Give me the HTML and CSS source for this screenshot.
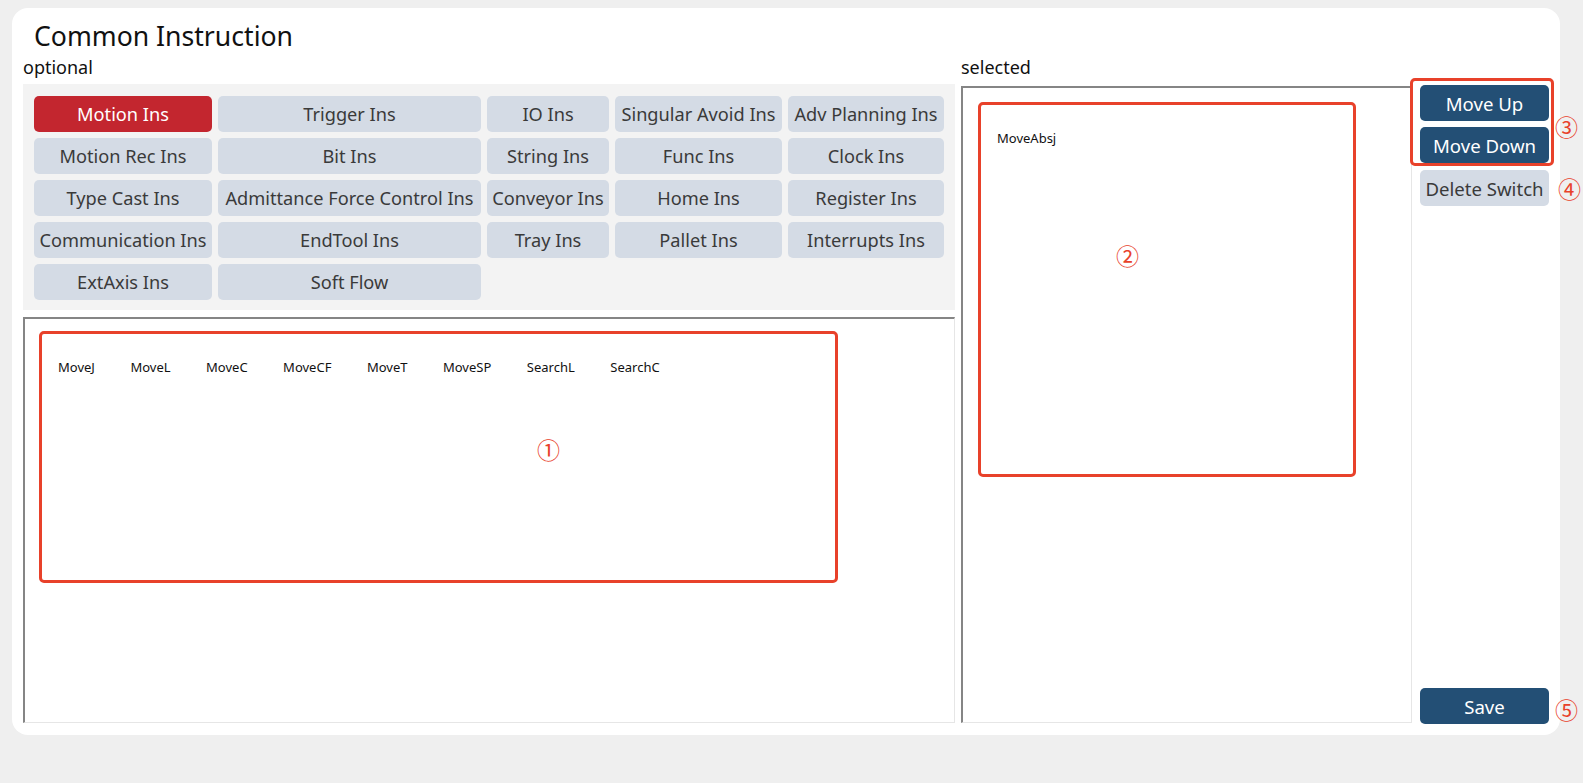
FILE: index.html
```html
<!DOCTYPE html>
<html lang="en">
<head>
<meta charset="utf-8">
<title>Common Instruction</title>
<link rel="stylesheet" href="styles.css">
</head>
<body>
<div class="card">
  <h1 class="title">Common Instruction</h1>
  <div class="main">
    <section class="col-optional">
      <div class="label">optional</div>
      <div class="category-panel">
        <button class="cat active">Motion Ins</button>
        <button class="cat">Trigger Ins</button>
        <button class="cat">IO Ins</button>
        <button class="cat">Singular Avoid Ins</button>
        <button class="cat">Adv Planning Ins</button>
        <button class="cat">Motion Rec Ins</button>
        <button class="cat">Bit Ins</button>
        <button class="cat">String Ins</button>
        <button class="cat">Func Ins</button>
        <button class="cat">Clock Ins</button>
        <button class="cat">Type Cast Ins</button>
        <button class="cat">Admittance Force Control Ins</button>
        <button class="cat">Conveyor Ins</button>
        <button class="cat">Home Ins</button>
        <button class="cat">Register Ins</button>
        <button class="cat">Communication Ins</button>
        <button class="cat">EndTool Ins</button>
        <button class="cat">Tray Ins</button>
        <button class="cat">Pallet Ins</button>
        <button class="cat">Interrupts Ins</button>
        <button class="cat">ExtAxis Ins</button>
        <button class="cat">Soft Flow</button>
      </div>
      <div class="list-box">
        <div class="mark-frame frame-optional">
          <ul class="items">
            <li>MoveJ</li>
            <li>MoveL</li>
            <li>MoveC</li>
            <li>MoveCF</li>
            <li>MoveT</li>
            <li>MoveSP</li>
            <li>SearchL</li>
            <li>SearchC</li>
          </ul>
          <span class="mark mark-1">①</span>
        </div>
      </div>
    </section>
    <section class="col-selected">
      <div class="label">selected</div>
      <div class="list-box selected-box">
        <div class="mark-frame frame-selected">
          <ul class="items">
            <li>MoveAbsj</li>
          </ul>
          <span class="mark mark-2">②</span>
        </div>
      </div>
    </section>
    <aside class="actions">
      <button class="act primary">Move Up</button>
      <button class="act primary">Move Down</button>
      <button class="act light delete">Delete Switch</button>
      <button class="act primary save">Save</button>
      <div class="mark-box"></div>
      <span class="mark mark-3">③</span>
      <span class="mark mark-4">④</span>
      <span class="mark mark-5">⑤</span>
    </aside>
  </div>
</div>
</body>
</html>
```

FILE: styles.css
```css
* { box-sizing: border-box; }

html, body {
  margin: 0;
  padding: 0;
}

body {
  background: #efefef;
  font-family: "Noto Sans", "Liberation Sans", sans-serif;
  color: #111;
  width: 1583px;
  height: 783px;
  overflow: hidden;
}

.card {
  margin: 8px 0 0 12px;
  width: 1548px;
  height: 727px;
  background: #ffffff;
  border-radius: 16px;
  padding: 10px 0 10px 11px;
  display: flex;
  flex-direction: column;
}

.title {
  margin: 0 0 0 11px;
  font-size: 26.6px;
  font-weight: 400;
  line-height: 36px;
  height: 36px;
  color: #111;
}

.main {
  flex: 1;
  display: flex;
  min-height: 0;
}

.col-optional {
  width: 932px;
  display: flex;
  flex-direction: column;
  padding-bottom: 2px;
}

.col-selected {
  width: 451px;
  margin-left: 6px;
  display: flex;
  flex-direction: column;
  padding-bottom: 2px;
}

.label {
  font-size: 18px;
  line-height: 22px;
  padding-top: 2px;
  margin-bottom: 6px;
  color: #111;
}

.category-panel {
  background: #f3f3f3;
  padding: 12px 11px 10px 11px;
  display: grid;
  grid-template-columns: 178px 263px 122px 167px 156px;
  grid-auto-rows: 36px;
  gap: 6px;
}

.cat {
  border: none;
  border-radius: 5px;
  background: #d4dbe5;
  color: #3a3a3a;
  font-family: inherit;
  font-size: 18.2px;
  padding: 0;
  white-space: nowrap;
  cursor: pointer;
}

.cat.active {
  background: #c3262f;
  color: #ffffff;
}

.list-box {
  flex: 1;
  margin-top: 7px;
  border-top: 2px solid #858585;
  border-left: 2px solid #858585;
  border-right: 1px solid #e6e6e6;
  border-bottom: 1px solid #e6e6e6;
  padding: 12px 0 0 14px;
  background: #fff;
}

.selected-box {
  margin-top: 2px;
  padding: 14px 0 0 15px;
}

.mark-frame {
  position: relative;
  border: 3px solid #e8412a;
  border-radius: 5px;
}

.frame-optional {
  width: 799px;
  height: 252px;
}

.frame-selected {
  width: 378px;
  height: 375px;
}

.items {
  list-style: none;
  margin: 0;
  padding: 24px 0 0 16px;
  display: flex;
  gap: 35.5px;
  font-size: 13px;
  line-height: 18px;
  color: #111;
}

.mark {
  position: absolute;
  width: 22px;
  height: 22px;
  line-height: 22px;
  text-align: center;
  font-family: "Noto Sans CJK SC", "DejaVu Sans", sans-serif;
  font-size: 23px;
  color: #e8412a;
}

.mark-1 { left: 495px; top: 104px; }
.mark-2 { left: 135px; top: 139px; }

.actions {
  position: relative;
  width: 148px;
  padding: 31px 11px 0 8px;
  display: flex;
  flex-direction: column;
  gap: 6px;
}

.act {
  width: 129px;
  height: 36px;
  border: none;
  border-radius: 5px;
  font-family: inherit;
  font-size: 18.6px;
  padding: 0;
  white-space: nowrap;
  cursor: pointer;
}

.act.primary {
  background: #234f75;
  color: #ffffff;
}

.act.light {
  background: #d4dbe5;
  color: #3a3a3a;
}

.act.delete { margin-top: 1px; }

.act.save {
  margin-top: auto;
  margin-bottom: 1px;
}

.mark-box {
  position: absolute;
  left: -2px;
  top: 24px;
  width: 144px;
  height: 88px;
  border: 3px solid #e8412a;
  border-radius: 5px;
  pointer-events: none;
}

.mark-3 { left: 143px; top: 61px; }
.mark-4 { left: 146px; top: 123px; }
.mark-5 { left: 143px; bottom: 5px; }
```
